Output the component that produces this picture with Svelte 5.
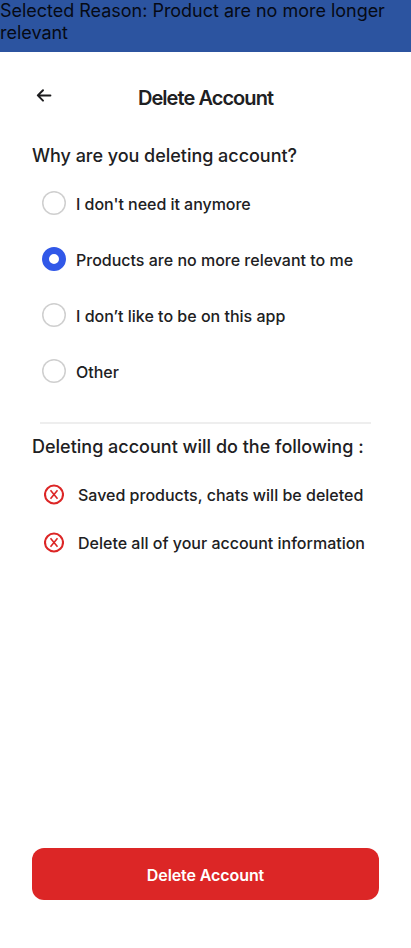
<script>
  let selected = $state(1);
  const reasons = ["I don't need it anymore", 'Products are no more relevant to me', 'I don’t like to be on this app', 'Other'];
  const effects = ['Saved products, chats will be deleted', 'Delete all of your account information'];
</script>

<div class="page">
  <div class="banner">Selected Reason: Product are no more longer relevant</div>
  <header>
    <button class="back" aria-label="Back">
      <svg width="24" height="24" viewBox="0 0 24 24" fill="none" stroke="#1c1c1e" stroke-width="2" stroke-linecap="round" stroke-linejoin="round"><path d="M18.4 12.4H6M11 7.2l-5.2 5.2 5.2 5.2" /></svg>
    </button>
    <h1>Delete Account</h1>
  </header>
  <h2 class="question">Why are you deleting account?</h2>
  <div class="reasons">
    {#each reasons as reason, i}
      <button class="reason" onclick={() => (selected = i)}>
        <span class="radio" class:on={selected === i}></span>
        <span class="label">{reason}</span>
      </button>
    {/each}
  </div>
  <hr />
  <h2 class="second">Deleting account will do the following :</h2>
  <ul>
    {#each effects as effect}
      <li>
        <svg width="20" height="21" viewBox="0 0 20 21" fill="none" stroke="#dc2626"><circle cx="10" cy="10.5" r="9" stroke-width="2.1" /><path d="M6.5 6.2l7 8.6M13.5 6.2l-7 8.6" stroke-width="1.6" /></svg>
        <span>{effect}</span>
      </li>
    {/each}
  </ul>
  <button class="delete">Delete Account</button>
</div>

<style>
  .page { width: 411px; height: 948px; box-sizing: border-box; padding-bottom: 48px; display: flex; flex-direction: column; background: #fff; color: #202022; font-family: Inter, sans-serif; overflow: hidden; }
  button { font: inherit; color: inherit; border: 0; background: none; padding: 0; }
  .banner { height: 52px; background: #2c54a0; color: #060a14; font-size: 18px; line-height: 22px; letter-spacing: -0.02px; }
  header { display: grid; grid-template-columns: 24px 1fr 24px; margin: 31px 32px 0; height: 28px; }
  .back { width: 24px; height: 24px; }
  .back svg { display: block; }
  h1 { margin: 0; text-align: center; font-size: 20px; line-height: 30px; font-weight: 600; letter-spacing: -0.94px; }
  h2 { margin: 33px 32px 0; font-size: 18px; line-height: 24px; font-weight: 500; }
  .question { letter-spacing: -0.03px; }
  .reasons { margin: 7px 42px 0; }
  .reason { display: flex; align-items: center; gap: 10px; height: 56px; width: 100%; text-align: left; }
  .reason:first-child .label { letter-spacing: -0.04px; }
  .radio { width: 24px; height: 24px; box-sizing: border-box; border-radius: 50%; box-shadow: inset 0 0 0 1.5px #cfcfcf; }
  .radio.on { border: 7px solid #3158e8; box-shadow: none; }
  .label { font-size: 16px; line-height: 24px; font-weight: 500; padding-top: 2px; }
  hr { width: 331px; height: 2px; margin: 23px 40px 0; border: 0; background: #eee; }
  .second { margin-top: 11px; }
  ul { margin: 11px 44px 0; padding: 0; list-style: none; }
  li { display: flex; align-items: center; gap: 14px; height: 48px; font-size: 16px; font-weight: 500; white-space: nowrap; }
  li span { padding-top: 2px; }
  .delete { margin: auto 32px 0; height: 52px; border-radius: 12px; background: #dc2626; color: #fff; font-size: 16px; font-weight: 600; padding-top: 2px; letter-spacing: -0.1px; }
</style>
